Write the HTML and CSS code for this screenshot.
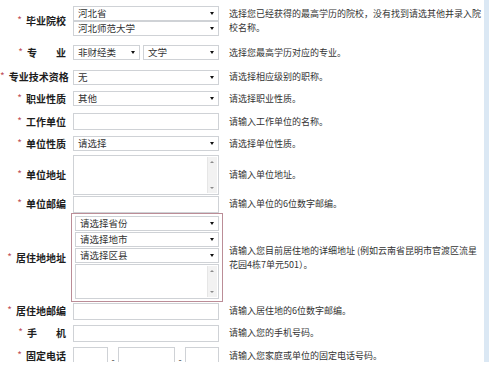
FILE: index.html
```html
<!DOCTYPE html>
<html lang="zh-CN">
<head>
<meta charset="utf-8">
<title>学历信息</title>
<link rel="stylesheet" href="styles.css">
</head>
<body>
<div class="page">
  <div class="form">
    <div class="lbl"><i>*</i>毕业院校</div>
    <div class="fld stack">
      <div class="sel">河北省<b></b></div>
      <div class="sel">河北师范大学<b></b></div>
    </div>
    <div class="hint">选择您已经获得的最高学历的院校，没有找到请选其他并录入院<br>校名称。</div>

    <div class="lbl"><i>*</i><span class="wide"><span>专</span><span>业</span></span></div>
    <div class="fld pair">
      <div class="sel short">非财经类<b></b></div>
      <div class="sel grow">文学<b></b></div>
    </div>
    <div class="hint">选择您最高学历对应的专业。</div>

    <div class="lbl"><i>*</i>专业技术资格</div>
    <div class="fld"><div class="sel">无<b></b></div></div>
    <div class="hint">请选择相应级别的职称。</div>

    <div class="lbl"><i>*</i>职业性质</div>
    <div class="fld"><div class="sel">其他<b></b></div></div>
    <div class="hint">请选择职业性质。</div>

    <div class="lbl"><i>*</i>工作单位</div>
    <div class="fld"><div class="inp"></div></div>
    <div class="hint">请输入工作单位的名称。</div>

    <div class="lbl"><i>*</i>单位性质</div>
    <div class="fld"><div class="sel">请选择<b></b></div></div>
    <div class="hint">请选择单位性质。</div>

    <div class="lbl"><i>*</i>单位地址</div>
    <div class="fld"><div class="area tall"><div class="bar"><u class="up"></u><u class="dn"></u></div></div></div>
    <div class="hint">请输入单位地址。</div>

    <div class="lbl"><i>*</i>单位邮编</div>
    <div class="fld"><div class="inp"></div></div>
    <div class="hint">请输入单位的6位数字邮编。</div>

    <div class="lbl"><i>*</i>居住地地址</div>
    <div class="fld box">
      <div class="sel">请选择省份<b></b></div>
      <div class="sel">请选择地市<b></b></div>
      <div class="sel">请选择区县<b></b></div>
      <div class="area"><div class="bar"><u class="up"></u><u class="dn"></u></div></div>
    </div>
    <div class="hint">请输入您目前居住地的详细地址 (例如云南省昆明市官渡区流星<br>花园4栋7单元501）。</div>

    <div class="lbl"><i>*</i>居住地邮编</div>
    <div class="fld"><div class="inp"></div></div>
    <div class="hint">请输入居住地的6位数字邮编。</div>

    <div class="lbl"><i>*</i><span class="wide"><span>手</span><span>机</span></span></div>
    <div class="fld"><div class="inp"></div></div>
    <div class="hint">请输入您的手机号码。</div>

    <div class="lbl"><i>*</i>固定电话</div>
    <div class="fld phone">
      <div class="inp p1"></div><span class="dash">-</span>
      <div class="inp p2"></div><span class="dash">-</span>
      <div class="inp p3"></div>
    </div>
    <div class="hint">请输入您家庭或单位的固定电话号码。</div>
  </div>
</div>
</body>
</html>
```

FILE: styles.css
```css
html, body {
  margin: 0;
  padding: 0;
  background: #ffffff;
}
body {
  font-family: "Noto Sans CJK SC", "Liberation Sans", sans-serif;
  color: #333;
}
.page {
  width: 484px;
  height: 362px;
  border-right: 5px solid #dbe8f4;
  background: #fff;
}
.form {
  display: grid;
  grid-template-columns: 66px 152px 1fr;
  grid-template-rows: 33px 31px 18px 25px 21px 23px 40px 18px 89px 18px 26px 20px;
  column-gap: 5px;
  padding-top: 4px;
  align-items: center;
}
.lbl {
  text-align: right;
  font-size: 10px;
  line-height: 14px;
  font-weight: 700;
  color: #1d1d1d;
  white-space: nowrap;
}
.lbl i {
  font-style: normal;
  color: #c0505a;
  font-weight: 400;
  margin-right: 4px;
  position: relative;
  top: -1px;
}
.wide {
  display: inline-flex;
  width: 39px;
  justify-content: space-between;
  vertical-align: top;
}
.hint {
  padding-left: 1px;
  font-size: 9px;
  line-height: 14px;
  color: #333;
  white-space: nowrap;
}
.fld {
  padding-left: 2px;
  width: 146px;
}
.sel, .inp, .area {
  box-sizing: border-box;
  background: #fff;
  border: 1px solid #cfd2d6;
}
.sel {
  height: 15px;
  display: flex;
  align-items: center;
  justify-content: space-between;
  padding: 0 4px 0 4px;
  font-size: 9.5px;
  line-height: 13px;
  color: #333;
}
.sel b {
  width: 0;
  height: 0;
  border-left: 2.5px solid transparent;
  border-right: 2.5px solid transparent;
  border-top: 3px solid #111;
}
.pair {
  display: flex;
  gap: 3px;
}
.pair .short { width: 67px; flex: none; }
.pair .grow { flex: 1; }
.inp { height: 17px; }
.area {
  position: relative;
  height: 40px;
}
.bar {
  position: absolute;
  top: 1px;
  right: 1px;
  bottom: 1px;
  width: 9px;
  background: #f2f2f2;
  border-left: 1px solid #e6e6e6;
}
.bar u {
  position: absolute;
  left: 2px;
  width: 0;
  height: 0;
  border-left: 2.5px solid transparent;
  border-right: 2.5px solid transparent;
}
.bar .up { top: 4px; border-bottom: 2px solid #8a8a8a; }
.bar .dn { bottom: 4px; border-top: 2px solid #8a8a8a; }
.box {
  box-sizing: border-box;
  padding: 2px 3px;
  width: 152px;
  height: 89px;
  border: 1px solid #bb8d97;
  display: flex;
  flex-direction: column;
  gap: 1px;
}
.box .area { height: 36px; }
.phone {
  display: flex;
  align-items: center;
}
.phone .inp { height: 18px; }
.p1 { width: 35px; }
.p2 { width: 57px; }
.p3 { width: 34px; }
.dash {
  width: 10px;
  text-align: center;
  font-size: 9px;
  line-height: 10px;
  align-self: flex-end;
  color: #333;
}
```
